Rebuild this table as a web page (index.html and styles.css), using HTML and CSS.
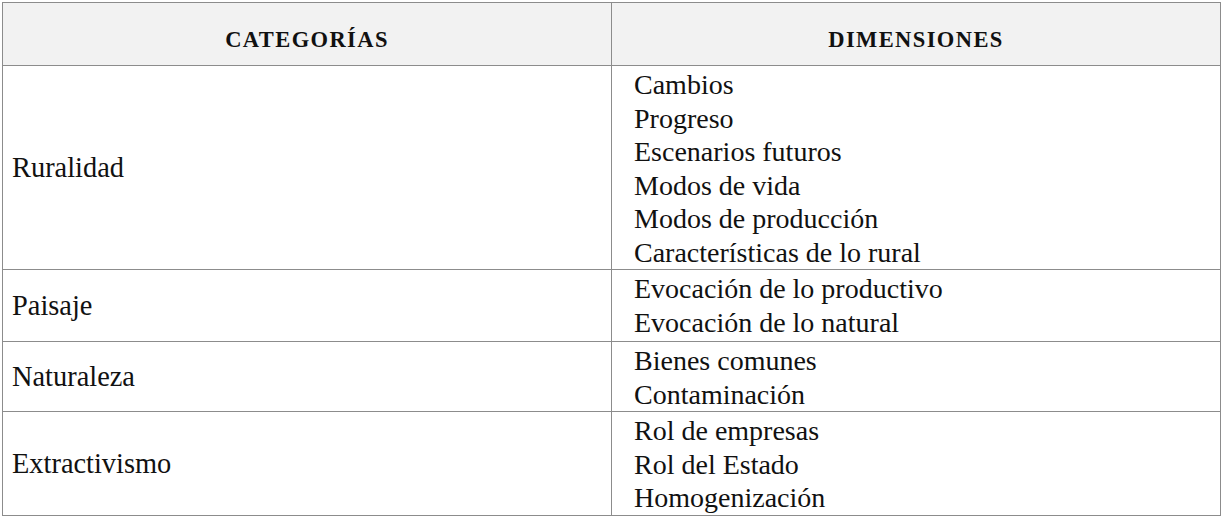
FILE: index.html
```html
<!DOCTYPE html>
<html lang="es">
<head>
<meta charset="utf-8">
<link rel="stylesheet" href="styles.css">
</head>
<body>
<table class="tbl">
  <colgroup><col class="c1"><col class="c2"></colgroup>
  <thead>
    <tr class="rh"><th>CATEGORÍAS</th><th>DIMENSIONES</th></tr>
  </thead>
  <tbody>
    <tr class="r1">
      <td class="cat">Ruralidad</td>
      <td class="dim">Cambios<br>Progreso<br>Escenarios futuros<br>Modos de vida<br>Modos de producción<br>Características de lo rural</td>
    </tr>
    <tr class="r2">
      <td class="cat">Paisaje</td>
      <td class="dim">Evocación de lo productivo<br>Evocación de lo natural</td>
    </tr>
    <tr class="r3">
      <td class="cat">Naturaleza</td>
      <td class="dim">Bienes comunes<br>Contaminación</td>
    </tr>
    <tr class="r4">
      <td class="cat">Extractivismo</td>
      <td class="dim">Rol de empresas<br>Rol del Estado<br>Homogenización</td>
    </tr>
  </tbody>
</table>
</body>
</html>
```
FILE: styles.css
```css
html, body { margin: 0; padding: 0; background: #fff; }
body { padding: 2px; }
.tbl {
  border-collapse: collapse;
  width: 1218px;
  table-layout: fixed;
  font-family: "Liberation Serif", "Times New Roman", serif;
  color: #111;
}
.c1 { width: 609px; }
.c2 { width: 609px; }
.tbl th, .tbl td { border: 1px solid #8c8c8c; padding: 0; }
.rh { height: 63px; }
.r1 { height: 204px; }
.r2 { height: 72px; }
.r3 { height: 69px; }
.r4 { height: 104px; }
.tbl th {
  background: #f2f2f2;
  font-size: 22.5px;
  font-weight: bold;
  letter-spacing: 1.4px;
  text-align: center;
  vertical-align: middle;
  padding-top: 12px;
}
.tbl td { font-size: 28.4px; line-height: 33.5px; }
.tbl .cat { padding: 0 0 0 9px; vertical-align: middle; }
.tbl .dim { padding: 2px 0 0 22px; vertical-align: top; font-size: 28px; }
```
